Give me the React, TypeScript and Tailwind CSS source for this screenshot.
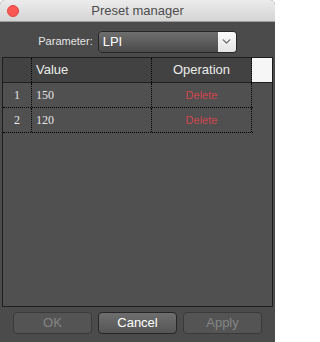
import { ChevronDown } from "lucide-react";

const rows = [
  { id: 1, value: "150" },
  { id: 2, value: "120" },
];

const sans = { fontFamily: '"Liberation Sans", Arial, sans-serif' };

export default function App() {
  return (
    <div
      className="w-[275px] h-[342px] bg-[#4b4b4b] flex flex-col overflow-hidden rounded-t-[5px]"
      style={sans}
    >
      {/* Title bar */}
      <div className="relative h-[22px] flex items-center justify-center bg-gradient-to-b from-[#ececec] to-[#d4d4d4] border-b border-[#9d9d9d]">
        <span className="absolute left-[7px] top-[5px] w-[12px] h-[12px] rounded-full bg-[#fc5753] border border-[#df4744]" />
        <span className="text-[13px] text-[#4d4d4d]">Preset manager</span>
      </div>

      {/* Parameter selector */}
      <div className="flex items-center justify-center gap-[5px] pt-[5px] h-[34px]">
        <span className="text-[11px] text-[#e6e6e6]">Parameter:</span>
        <div className="flex w-[139px] h-[22px] rounded-[4px] border border-[#262626] overflow-hidden">
          <div className="flex-1 flex items-center pl-[4px] text-[13px] text-white bg-gradient-to-b from-[#6f6f6f] to-[#4a4a4a]">
            LPI
          </div>
          <div className="w-[18px] flex items-center justify-center bg-gradient-to-b from-[#fafafa] to-[#e4e4e4]">
            <ChevronDown className="w-[13px] h-[13px] text-[#6e6e6e]" strokeWidth={2.5} />
          </div>
        </div>
      </div>

      {/* Table */}
      <div className="mx-[2px] mt-[1px] h-[250px] border border-[#1e1e1e] bg-[#505050] flex flex-col">
        <div className="flex h-[25px] bg-[#424242] border-b border-[#1e1e1e]">
          <div className="w-[29px] border-r border-dotted border-black" />
          <div className="w-[120px] flex items-center pl-[4px] text-[13px] text-[#ececec] border-r border-dotted border-black">
            Value
          </div>
          <div className="w-[100px] flex items-center justify-center text-[13px] text-[#ececec] border-r border-dotted border-black">
            Operation
          </div>
          <div className="flex-1 bg-[#f6f6f6]" />
        </div>
        {rows.map((row) => (
          <div key={row.id} className="flex h-[25px] w-[250px] border-b border-dotted border-black">
            <div
              className="w-[29px] flex items-center justify-center text-[12px] text-[#e6e6e6] border-r border-dotted border-black"
              style={{ fontFamily: '"Liberation Serif", "Times New Roman", serif' }}
            >
              {row.id}
            </div>
            <div
              className="w-[120px] flex items-center pl-[4px] text-[12px] text-[#e6e6e6] border-r border-dotted border-black"
              style={{ fontFamily: '"Liberation Serif", "Times New Roman", serif' }}
            >
              {row.value}
            </div>
            <div className="w-[100px] flex items-center justify-center text-[11px] text-[#d2444e] border-r border-dotted border-black">
              Delete
            </div>
          </div>
        ))}
      </div>

      {/* Buttons */}
      <div className="flex gap-[6px] px-[13px] pt-[5px]">
        <button className="w-[80px] h-[22px] rounded-[4px] border border-[#3a3a3a] bg-[#545454] text-[13px] text-[#858585]">
          OK
        </button>
        <button className="w-[80px] h-[22px] rounded-[4px] border border-[#262626] bg-gradient-to-b from-[#6e6e6e] to-[#555555] text-[13px] text-white">
          Cancel
        </button>
        <button className="w-[80px] h-[22px] rounded-[4px] border border-[#3a3a3a] bg-[#545454] text-[13px] text-[#858585]">
          Apply
        </button>
      </div>
    </div>
  );
}
